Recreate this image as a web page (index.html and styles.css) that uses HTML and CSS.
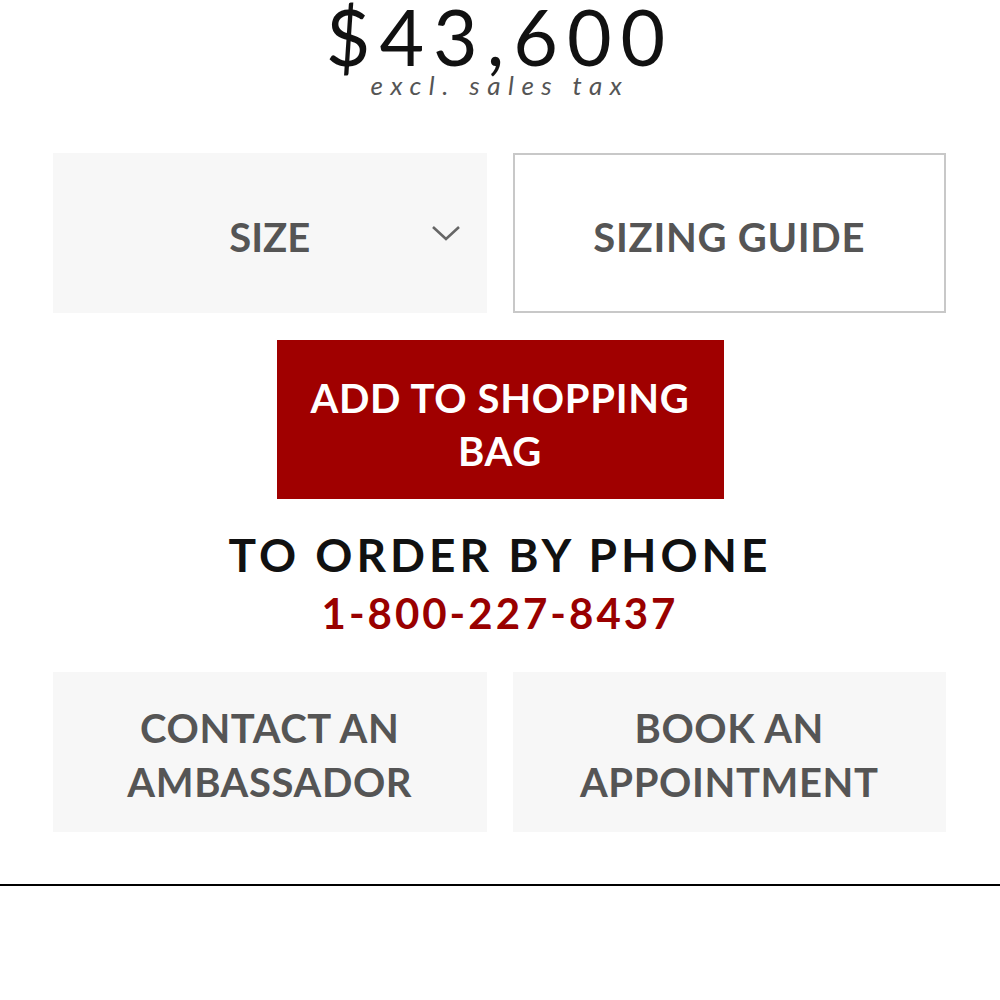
FILE: index.html
```html
<html>
  <head>
    <title>Product</title>
    <meta name="viewport" content="width=device-width, initial-scale=1.0">
    <link rel="stylesheet" href="styles.css">
  </head>
  <body>
    <div class="price-block">
      <div class="price">$43,600</div>
      <div class="tax">excl. sales tax</div>
    </div>

    <div class="row">
      <div class="box size-box">
        <span class="size-label">SIZE</span>
        <svg class="chevron" width="30" height="18" viewBox="0 0 30 18">
          <path d="M2 3 L15 15 L28 3" fill="none" stroke="#666" stroke-width="2.6"/>
        </svg>
      </div>
      <div class="box guide-box">SIZING GUIDE</div>
    </div>

    <div class="add-wrap">
      <button class="add-button">ADD TO SHOPPING<br>BAG</button>
    </div>

    <div class="phone-block">
      <div class="phone-title">TO ORDER BY PHONE</div>
      <div class="phone-number">1-800-227-8437</div>
    </div>

    <div class="row">
      <div class="box grey-box">CONTACT AN<br>AMBASSADOR</div>
      <div class="box grey-box">BOOK AN<br>APPOINTMENT</div>
    </div>

    <hr class="divider">
  </body>
</html>
```

FILE: styles.css
```css
body {
  font-family: Lato, "Liberation Sans", sans-serif;
  margin: 0;
  padding: 0;
  background: #fff;
}
.price-block {
  text-align: center;
  height: 124px;
}
.price {
  font-size: 77px;
  font-weight: 400;
  letter-spacing: 9px;
  line-height: 68px;
  padding-top: 2px;
  color: #111;
}
.tax {
  font-size: 26px;
  font-style: italic;
  letter-spacing: 7.5px;
  color: #555;
  line-height: 30px;
}
.row {
  display: grid;
  grid-template-columns: 1fr 1fr;
  gap: 26px;
  padding: 29px 54px 0 53px;
}
.box {
  height: 160px;
  box-sizing: border-box;
  display: flex;
  align-items: center;
  justify-content: center;
  text-align: center;
  color: #555;
  font-weight: 700;
  font-size: 40px;
  padding-top: 8px;
}
.size-box {
  background: #f7f7f7;
  position: relative;
}
.chevron {
  position: absolute;
  right: 26px;
  top: 71px;
}
.guide-box {
  border: 2px solid #c8c8c8;
  background: #fff;
  letter-spacing: 0.7px;
}
.add-wrap {
  display: flex;
  justify-content: center;
  padding-top: 27px;
}
.add-button {
  background-color: #a00000;
  border: none;
  color: #fff;
  width: 447px;
  height: 159px;
  font-family: Lato, "Liberation Sans", sans-serif;
  font-weight: 700;
  font-size: 40px;
  letter-spacing: 0.7px;
  line-height: 53px;
  padding: 10px 0 0 0;
}
.phone-block {
  text-align: center;
  padding-top: 28px;
}
.phone-title {
  font-size: 46px;
  font-weight: 700;
  letter-spacing: 4px;
  color: #111;
  line-height: 56px;
}
.phone-number {
  font-size: 42px;
  font-weight: 700;
  letter-spacing: 3px;
  color: #990000;
  line-height: 60px;
}
.grey-box {
  background: #f7f7f7;
  line-height: 54px;
  letter-spacing: 0.6px;
  padding-top: 6px;
}
.divider {
  border: none;
  border-top: 2px solid #000;
  margin: 52px 0 0 0;
}
```
